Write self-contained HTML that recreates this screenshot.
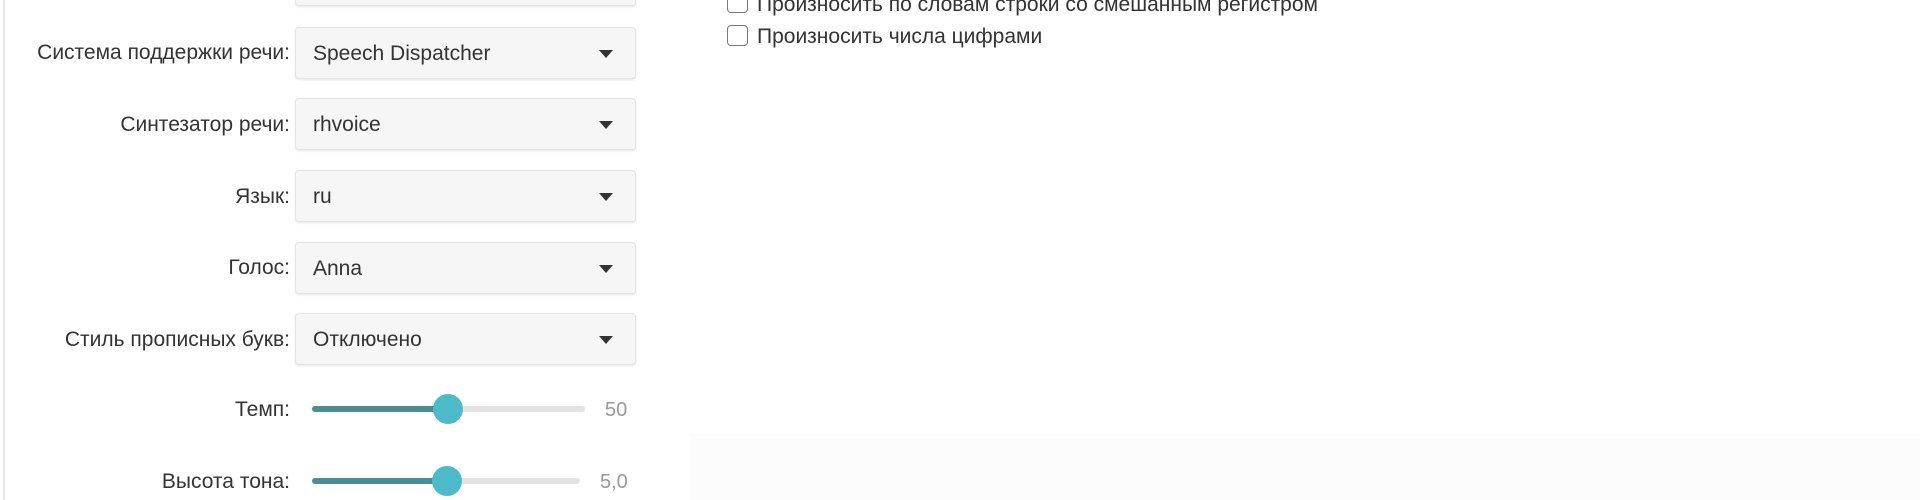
<!DOCTYPE html>
<html><head><meta charset="utf-8"><style>
*{margin:0;padding:0;box-sizing:border-box}
body{width:1920px;height:500px;background:#fff;position:relative;overflow:hidden;font-family:"Liberation Sans",sans-serif;color:#333;font-size:21px}
.vl{position:absolute;left:3px;top:0;width:2px;height:500px;background:#e8e8e8}
.bot{position:absolute;left:690px;top:434px;width:1230px;height:66px;background:#fcfcfc}
.lbl{position:absolute;right:1630px;white-space:nowrap;line-height:22px}
.box{position:absolute;left:295px;width:341px;height:52px;background:#f6f6f6;border:1px solid #e4e4e4;border-radius:4px;box-shadow:0 1px 2px rgba(0,0,0,.1)}
.box span{position:absolute;left:17px;top:15px;line-height:22px;white-space:nowrap}
.box i{position:absolute;right:22px;top:22px;width:0;height:0;border-left:7px solid transparent;border-right:7px solid transparent;border-top:8px solid #333}
.track{position:absolute;height:6px;border-radius:3px;background:#e3e3e3}
.fill{position:absolute;height:6px;border-radius:3px;background:#4a8e93}
.knob{position:absolute;width:30px;height:30px;border-radius:50%;background:#4cbac8}
.val{position:absolute;color:#999;line-height:22px;font-size:20px}
.cb{position:absolute;left:727px;width:21px;height:21px;border:1.5px solid #777;border-radius:4px;background:#fff}
.ct{position:absolute;left:757px;line-height:22px;white-space:nowrap}
</style></head><body>
<div class="vl"></div>
<div class="bot"></div>
<div class="box" style="top:-46px"></div>

<div class="lbl" style="top:42px">Система поддержки речи:</div>
<div class="box" style="top:27px"><span>Speech Dispatcher</span><i></i></div>
<div class="lbl" style="top:114px">Синтезатор речи:</div>
<div class="box" style="top:98px"><span>rhvoice</span><i></i></div>
<div class="lbl" style="top:186px">Язык:</div>
<div class="box" style="top:170px"><span>ru</span><i></i></div>
<div class="lbl" style="top:257px">Голос:</div>
<div class="box" style="top:242px"><span>Anna</span><i></i></div>
<div class="lbl" style="top:329px">Стиль прописных букв:</div>
<div class="box" style="top:313px"><span>Отключено</span><i></i></div>

<div class="lbl" style="top:399px">Темп:</div>
<div class="track" style="left:312px;width:273px;top:406px"></div>
<div class="fill" style="left:312px;width:136px;top:406px"></div>
<div class="knob" style="left:433px;top:394px"></div>
<div class="val" style="left:605px;top:399px">50</div>

<div class="lbl" style="top:471px">Высота тона:</div>
<div class="track" style="left:312px;width:268px;top:478px"></div>
<div class="fill" style="left:312px;width:135px;top:478px"></div>
<div class="knob" style="left:432px;top:466px"></div>
<div class="val" style="left:600px;top:471px">5,0</div>

<div class="cb" style="top:-8px"></div>
<div class="ct" style="top:-6px">Произносить по словам строки со смешанным регистром</div>
<div class="cb" style="top:25px"></div>
<div class="ct" style="top:26px">Произносить числа цифрами</div>
</body></html>
